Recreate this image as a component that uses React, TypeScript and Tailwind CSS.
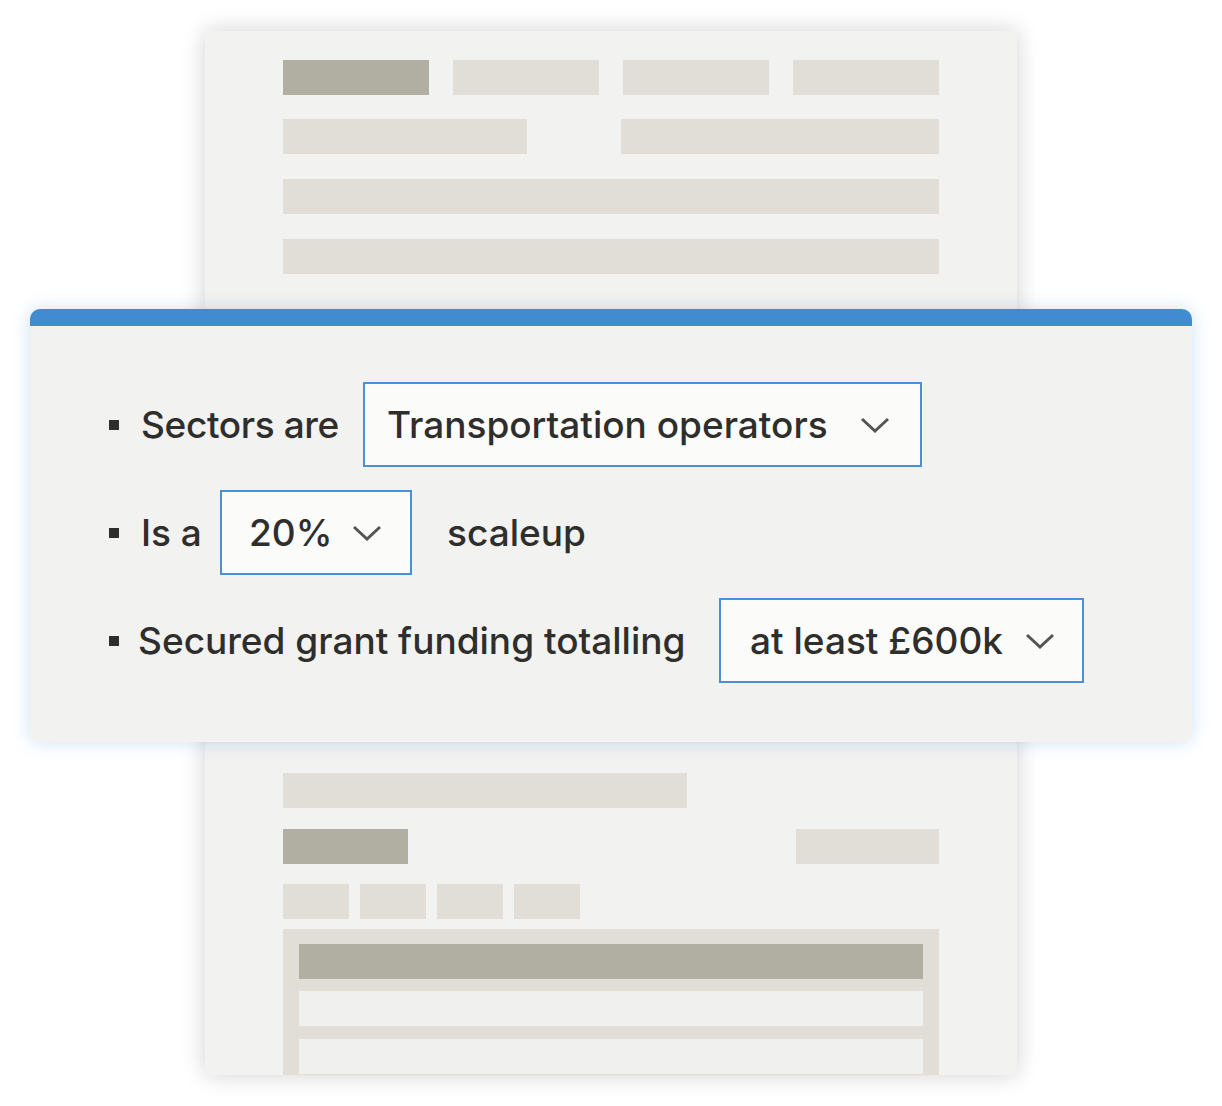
const bar = "h-[35px] bg-[#e0ded6]";
const barDark = "h-[35px] bg-[#b0afa2]";

function Chevron() {
  return (
    <svg width="30" height="16" viewBox="0 0 30 16" className="shrink-0">
      <polyline
        points="2,2 15,14 28,2"
        fill="none"
        stroke="#555552"
        strokeWidth="3"
      />
    </svg>
  );
}

function Select({
  label,
  width,
  pad,
}: {
  label: string;
  width: string;
  pad: string;
}) {
  return (
    <div
      className={`${width} ${pad} h-[85px] flex items-center justify-between border-2 border-[#4a90d9] bg-[#fbfbfa] shrink-0`}
    >
      <span className="whitespace-nowrap">{label}</span>
      <Chevron />
    </div>
  );
}

function Bullet() {
  return <span className="w-[10px] h-[10px] bg-[#2e2e2c] shrink-0" />;
}

export default function App() {
  return (
    <div className="relative w-[1222px] h-[1106px] bg-white overflow-hidden">
      {/* document skeleton behind the filter panel */}
      <div className="ml-[205px] mt-[31px] w-[812px] h-[1044px] bg-[#f2f2f0] shadow-[0_0_22px_rgba(0,0,0,0.18)] overflow-hidden px-[78px] pt-[29px]">
        <div className="flex justify-between">
          <div className={`${barDark} w-[146px]`} />
          <div className={`${bar} w-[146px]`} />
          <div className={`${bar} w-[146px]`} />
          <div className={`${bar} w-[146px]`} />
        </div>
        <div className="flex justify-between mt-[24px]">
          <div className={`${bar} w-[244px]`} />
          <div className={`${bar} w-[318px]`} />
        </div>
        <div className={`${bar} mt-[25px]`} />
        <div className={`${bar} mt-[25px]`} />

        <div className="h-[499px]" />

        <div className={`${bar} w-[404px]`} />
        <div className="flex justify-between mt-[21px]">
          <div className={`${barDark} w-[125px]`} />
          <div className={`${bar} w-[143px]`} />
        </div>
        <div className="flex gap-[11px] mt-[20px]">
          <div className={`${bar} w-[66px]`} />
          <div className={`${bar} w-[66px]`} />
          <div className={`${bar} w-[66px]`} />
          <div className={`${bar} w-[66px]`} />
        </div>
        <div className="mt-[10px] bg-[#e0ded6] px-[16px] pt-[15px] pb-[16px] flex flex-col gap-[12px]">
          <div className={barDark} />
          <div className="h-[35px] bg-[#f0f0ee]" />
          <div className="h-[35px] bg-[#f0f0ee] mt-[1px]" />
          <div className="h-[35px] bg-[#f0f0ee]" />
        </div>
      </div>

      {/* filter panel */}
      <div className="absolute left-[30px] top-[309px] w-[1162px] rounded-[10px] bg-[#f2f2f1] shadow-[0_0_18px_rgba(74,144,217,0.28)] overflow-hidden font-['Inter',sans-serif] font-medium text-[#2e2e2c] text-[37px]">
        <div className="h-[17px] bg-[#428bd0]" />
        <div className="pt-[56px] pb-[59px] pl-[79px] flex flex-col gap-[23px]">
          <div className="flex items-center">
            <Bullet />
            <span className="ml-[22px] w-[222px] whitespace-nowrap tracking-[-0.01em]">Sectors are</span>
            <Select label="Transportation operators" width="w-[559px]" pad="pl-[22px] pr-[30px]" />
          </div>
          <div className="flex items-center">
            <Bullet />
            <span className="ml-[22px] w-[79px] whitespace-nowrap">Is a</span>
            <Select label="20%" width="w-[192px]" pad="pl-[27px] pr-[28px]" />
            <span className="ml-[35px] whitespace-nowrap">scaleup</span>
          </div>
          <div className="flex items-center">
            <Bullet />
            <span className="ml-[19px] w-[581px] whitespace-nowrap">Secured grant funding totalling</span>
            <Select label="at least £600k" width="w-[365px]" pad="pl-[29px] pr-[27px]" />
          </div>
        </div>
      </div>
    </div>
  );
}
